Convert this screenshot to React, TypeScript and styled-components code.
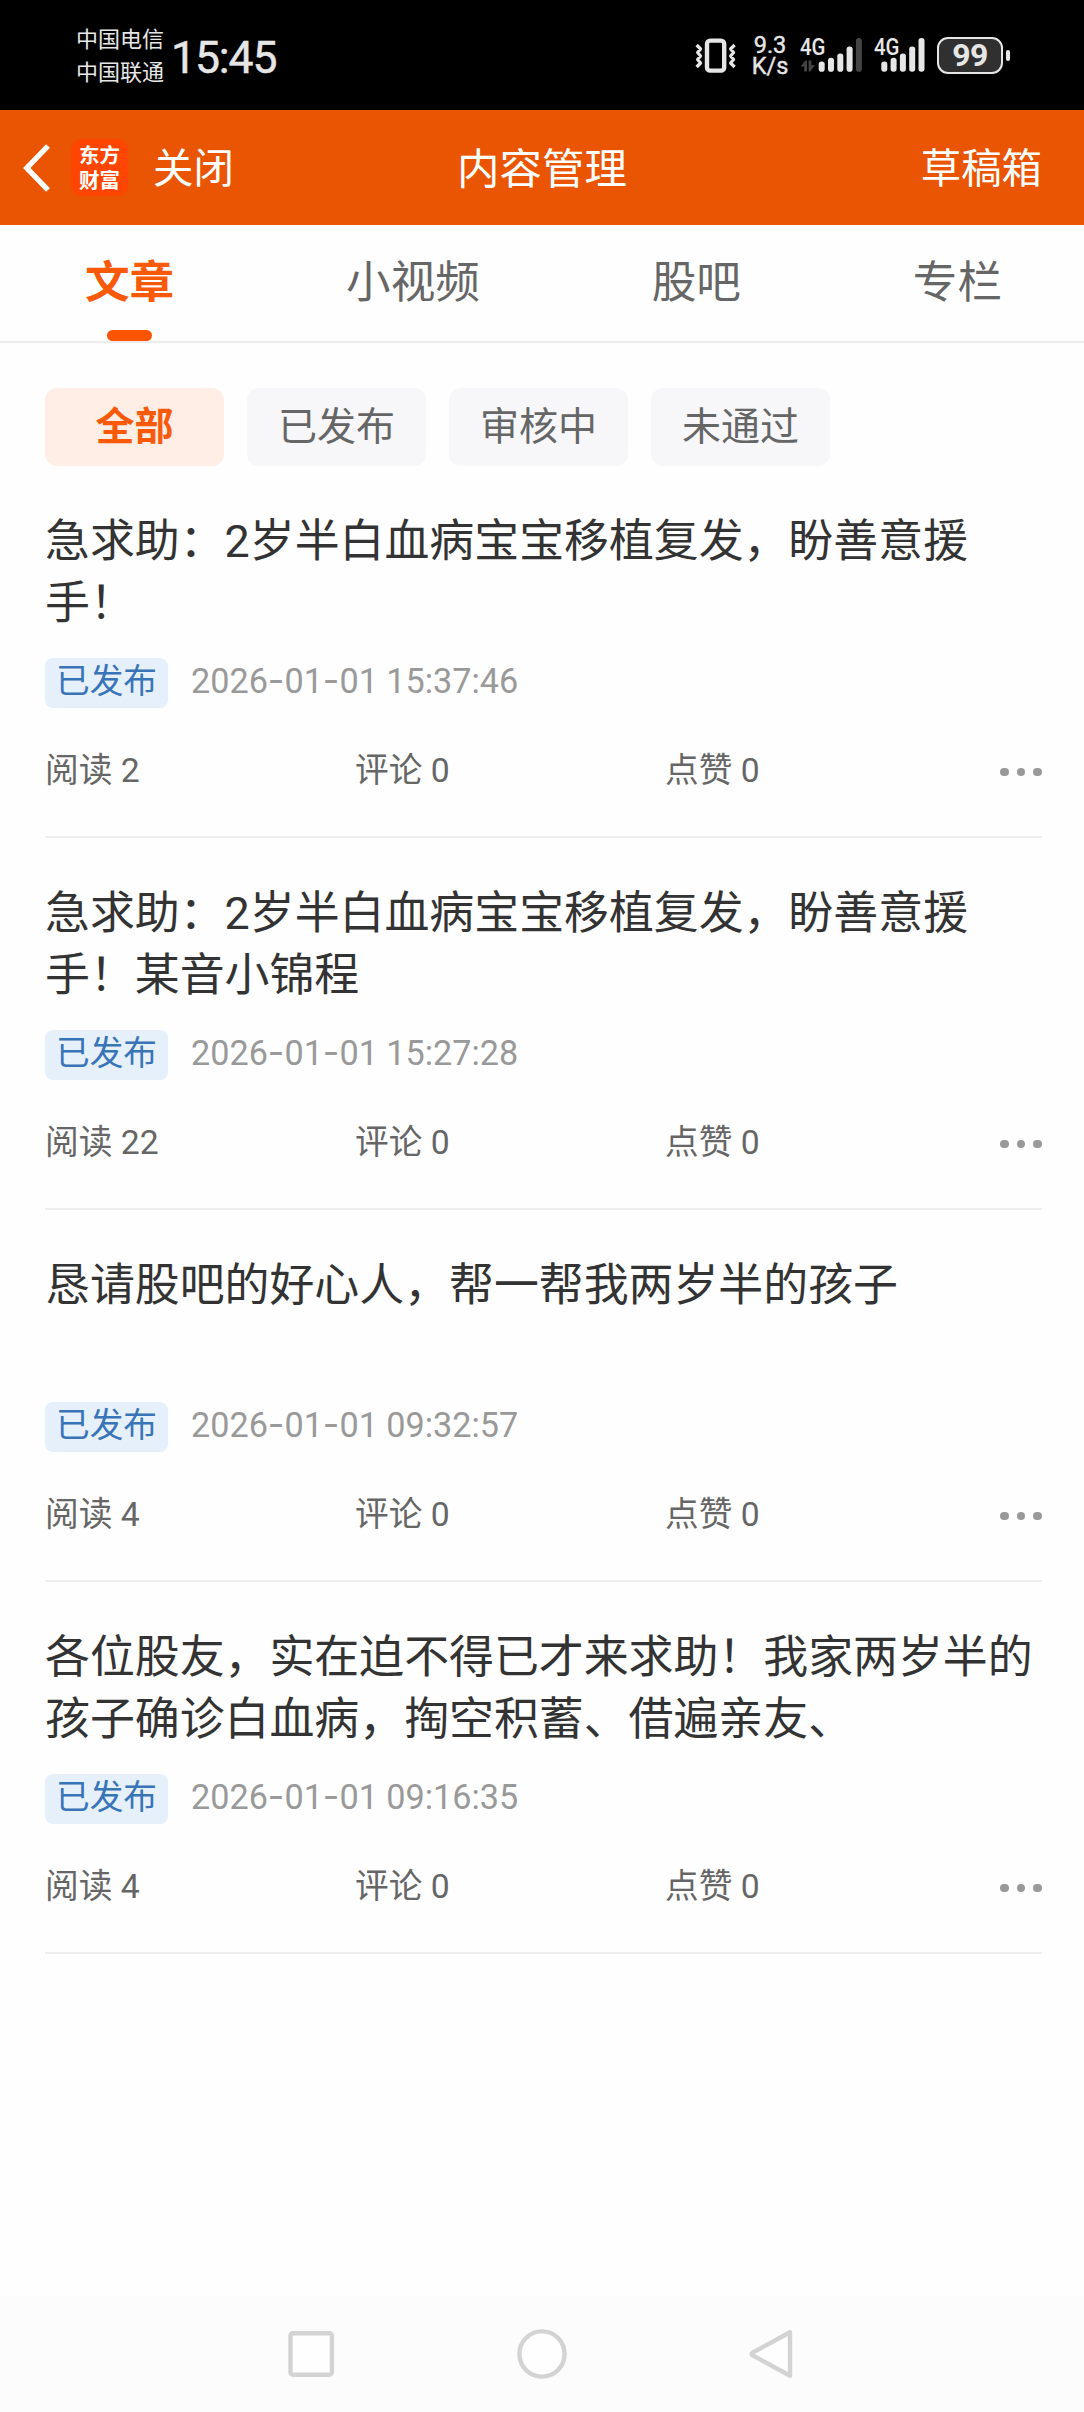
import React from "react";
import styled, { createGlobalStyle } from "styled-components";

const GlobalStyle = createGlobalStyle`
  *, *::before, *::after { box-sizing: border-box; }
  body {
    margin: 0;
    background: #fff;
    font-family: Roboto, "Noto Sans CJK SC", sans-serif;
  }
`;

const Screen = styled.div`
  width: 1084px;
  height: 2412px;
  display: flex;
  flex-direction: column;
  overflow: hidden;
  background: #fefefe;
`;

/* ---------- system status bar ---------- */

const StatusBar = styled.div`
  flex: none;
  height: 110px;
  padding: 0 74px 0 76px;
  display: flex;
  align-items: center;
  background: #000;
  color: #e6e6e6;
`;

const Carriers = styled.div`
  font-size: 22px;
  line-height: 33px;
  width: 95px;
  padding-top: 2px;
  white-space: nowrap;
`;

const Clock = styled.div`
  font-size: 44.5px;
  line-height: 52px;
  letter-spacing: -1.1px;
  padding-top: 5px;
  -webkit-text-stroke: 0.5px #e6e6e6;
`;

const StatusIcons = styled.div`
  margin-left: auto;
  display: flex;
  align-items: center;
  svg { display: block; }
`;

const NetSpeed = styled.div`
  width: 36px;
  margin: 2px 12px 0 15px;
  display: flex;
  flex-direction: column;
  align-items: center;
  font-size: 23.5px;
  line-height: 21px;
  -webkit-text-stroke: 0.4px #e6e6e6;
`;

const SignalSlot = styled.div<{ $after: number }>`
  margin-right: ${(p) => p.$after}px;
`;

const Battery = styled.div`
  width: 66px;
  height: 37px;
  border: 2.6px solid #e6e6e6;
  border-radius: 11px;
  background: #303030;
  font-size: 32px;
  font-weight: 700;
  line-height: 33px;
  text-align: center;
  letter-spacing: -0.6px;
`;

const BatteryTip = styled.div`
  width: 4px;
  height: 11px;
  margin-left: 3px;
  border-radius: 2px;
  background: #e6e6e6;
`;

/* ---------- app header ---------- */

const Header = styled.header`
  flex: none;
  height: 115px;
  padding: 0 42px 0 23px;
  display: grid;
  grid-template-columns: 1fr auto 1fr;
  align-items: center;
  background: #e95502;
  color: #fff;
`;

const HeaderLeft = styled.div`
  display: flex;
  align-items: center;
`;

const Logo = styled.div`
  width: 57px;
  height: 57px;
  margin: 0 25px 0 20px;
  display: flex;
  flex-direction: column;
  align-items: center;
  justify-content: center;
  padding-bottom: 2px;
  border-radius: 11px;
  background: #ff4502;
  font-family: "Noto Sans CJK SC", sans-serif;
  font-size: 20.5px;
  font-weight: 700;
  line-height: 25px;
`;

const HeaderAction = styled.button<{ $end?: boolean }>`
  all: unset;
  padding-top: 4px;
  font-size: 40.4px;
  line-height: 58px;
  justify-self: ${(p) => (p.$end ? "end" : "start")};
`;

const HeaderTitle = styled.h1`
  margin: 0 0 0 19px;
  padding-top: 4px;
  font-size: 42.5px;
  font-weight: 400;
  line-height: 60px;
`;

/* ---------- tabs and filters ---------- */

const Tabs = styled.nav`
  flex: none;
  height: 118px;
  display: flex;
  justify-content: space-between;
  padding: 0 82px 0 85px;
  border-bottom: 2px solid #ededed;
`;

const Tab = styled.div<{ $active?: boolean }>`
  display: flex;
  flex-direction: column;
  align-items: center;
  justify-content: space-between;
  padding-top: 25px;
  font-size: 44.6px;
  line-height: 66px;
  font-weight: ${(p) => (p.$active ? 700 : 400)};
  color: ${(p) => (p.$active ? "#f95a0a" : "#666")};
`;

const Indicator = styled.span`
  width: 45px;
  height: 11px;
  border-radius: 6px;
  background: #ff5500;
`;

const Filters = styled.div`
  flex: none;
  display: flex;
  gap: 23px;
  padding: 45px 45px 0;
`;

const Chip = styled.button<{ $active?: boolean }>`
  all: unset;
  width: 179px;
  height: 78px;
  border-radius: 12px;
  font-size: 39px;
  line-height: 75px;
  text-align: center;
  font-weight: ${(p) => (p.$active ? 700 : 400)};
  color: ${(p) => (p.$active ? "#f95a0a" : "#666")};
  background: ${(p) => (p.$active ? "#ffeee6" : "#f7f7fa")};
`;

/* ---------- article list ---------- */

const List = styled.main`
  flex: 1;
  padding: 0 42px 0 45px;
`;

const Article = styled.article`
  height: 372px;
  padding-top: 45px;
  border-bottom: 2px solid #eee;
`;

const Title = styled.h2`
  margin: 0;
  height: 124px;
  font-size: 44.9px;
  font-weight: 400;
  line-height: 62px;
  color: #333;
`;

const Meta = styled.div`
  display: flex;
  align-items: center;
  gap: 23px;
  margin-top: 22px;
`;

const Badge = styled.span`
  width: 123px;
  height: 50px;
  border-radius: 8px;
  background: #e5f0fa;
  color: #3a74b8;
  font-size: 33.7px;
  line-height: 47px;
  text-align: center;
`;

const DateText = styled.time`
  font-size: 34.2px;
  line-height: 47px;
  padding-bottom: 3px;
  color: #999;
`;

const Dash = styled.span`
  font-family: Inter, sans-serif;
  font-size: 36px;
`;

const Stats = styled.div`
  display: grid;
  grid-template-columns: 310px 310px 1fr auto;
  align-items: center;
  height: 40px;
  margin-top: 43px;
  font-size: 33.7px;
  line-height: 40px;
  color: #666;
`;

const More = styled.div`
  display: flex;
  gap: 8px;
  padding-top: 2px;
`;

const Dot = styled.i`
  width: 8.6px;
  height: 8.6px;
  border-radius: 50%;
  background: #999;
`;

/* ---------- system navigation ---------- */

const NavBar = styled.div`
  flex: none;
  height: 116px;
  padding: 0 286px;
  display: flex;
  align-items: center;
  justify-content: space-between;
  background: #fcfcfc;
`;

const BAR_TOPS = [25.4, 21.7, 17.4, 10.4, 2];

function Signal({ x, level, arrows }: { x: number; level: number; arrows?: boolean }) {
  return (
    <svg width={x + 43.5} height="54" viewBox={`0 -8 ${x + 43.5} 54`}>
      <text
        x="0"
        y="19"
        fontSize="23"
        fontWeight="500"
        fontFamily="Roboto, sans-serif"
        fill="#e6e6e6"
        textLength="25.5"
        lengthAdjust="spacingAndGlyphs"
      >
        4G
      </text>
      {arrows && (
        <path
          d="M0.6 30.5L5.4 24.4H7V35.4H4.2V30.5ZM8.6 24.4H11.4V29.3H15L10.2 35.4H8.6Z"
          fill="#444"
        />
      )}
      {BAR_TOPS.map((top, i) => (
        <rect
          key={top}
          x={x + i * 9.3}
          y={top}
          width="6"
          height={35.7 - top}
          rx="2.8"
          fill={i < level ? "#e6e6e6" : "#444"}
        />
      ))}
    </svg>
  );
}

const ARTICLES = [
  { title: "急求助：2岁半白血病宝宝移植复发，盼善意援手！", time: "15:37:46", reads: 2 },
  { title: "急求助：2岁半白血病宝宝移植复发，盼善意援手！某音小锦程", time: "15:27:28", reads: 22 },
  { title: "恳请股吧的好心人，帮一帮我两岁半的孩子", time: "09:32:57", reads: 4 },
  { title: "各位股友，实在迫不得已才来求助！我家两岁半的孩子确诊白血病，掏空积蓄、借遍亲友、", time: "09:16:35", reads: 4 },
];

export default function App() {
  return (
    <Screen>
      <GlobalStyle />
      <StatusBar>
        <Carriers>
          中国电信
          <br />
          中国联通
        </Carriers>
        <Clock>15:45</Clock>
        <StatusIcons>
          <svg width="43" height="36" viewBox="0 0 43 36" fill="none" stroke="#e6e6e6" strokeLinejoin="round">
            <rect x="13" y="3.6" width="17.2" height="30" rx="3.2" strokeWidth="4.4" />
            <path
              d="M2.6 8L6.6 12L3.6 15.5L6.6 19L3.6 22.5L6.6 26L2.6 30M40.6 8L36.6 12L39.6 15.5L36.6 19L39.6 22.5L36.6 26L40.6 30"
              strokeWidth="3.2"
            />
          </svg>
          <NetSpeed>
            <span>9.3</span>
            <span>K/s</span>
          </NetSpeed>
          <SignalSlot $after={12}>
            <Signal x={18.7} level={4} arrows />
          </SignalSlot>
          <SignalSlot $after={12}>
            <Signal x={7.3} level={5} />
          </SignalSlot>
          <Battery>99</Battery>
          <BatteryTip />
        </StatusIcons>
      </StatusBar>

      <Header>
        <HeaderLeft>
          <svg width="28" height="50" viewBox="0 0 28 50" fill="none" stroke="#fff" strokeWidth="5.4">
            <path d="M25 3L3.8 25L25 47" />
          </svg>
          <Logo>
            <span>东方</span>
            <span>财富</span>
          </Logo>
          <HeaderAction>关闭</HeaderAction>
        </HeaderLeft>
        <HeaderTitle>内容管理</HeaderTitle>
        <HeaderAction $end>草稿箱</HeaderAction>
      </Header>

      <Tabs>
        <Tab $active>
          文章
          <Indicator />
        </Tab>
        <Tab>小视频</Tab>
        <Tab>股吧</Tab>
        <Tab>专栏</Tab>
      </Tabs>

      <Filters>
        <Chip $active>全部</Chip>
        <Chip>已发布</Chip>
        <Chip>审核中</Chip>
        <Chip>未通过</Chip>
      </Filters>

      <List>
        {ARTICLES.map((a) => (
          <Article key={a.time}>
            <Title>{a.title}</Title>
            <Meta>
              <Badge>已发布</Badge>
              <DateText>
                2026<Dash>-</Dash>01<Dash>-</Dash>01 {a.time}
              </DateText>
            </Meta>
            <Stats>
              <span>阅读 {a.reads}</span>
              <span>评论 0</span>
              <span>点赞 0</span>
              <More>
                <Dot />
                <Dot />
                <Dot />
              </More>
            </Stats>
          </Article>
        ))}
      </List>

      <NavBar>
        <svg width="50" height="52" viewBox="0 0 50 52" fill="#fefefe" stroke="#d3d3d3" strokeWidth="4.4">
          <rect x="4.5" y="5.2" width="41.4" height="41.6" rx="2.5" />
        </svg>
        <svg width="52" height="52" viewBox="0 0 52 52" fill="#fefefe" stroke="#d3d3d3" strokeWidth="4.4">
          <circle cx="26" cy="26" r="22.6" />
        </svg>
        <svg width="50" height="52" viewBox="0 0 50 52" fill="#fefefe" stroke="#d3d3d3" strokeWidth="4.4" strokeLinejoin="round">
          <path d="M42 4.2V47.8L4.6 27.4Q2.4 26 4.6 24.6Z" />
        </svg>
      </NavBar>
    </Screen>
  );
}
